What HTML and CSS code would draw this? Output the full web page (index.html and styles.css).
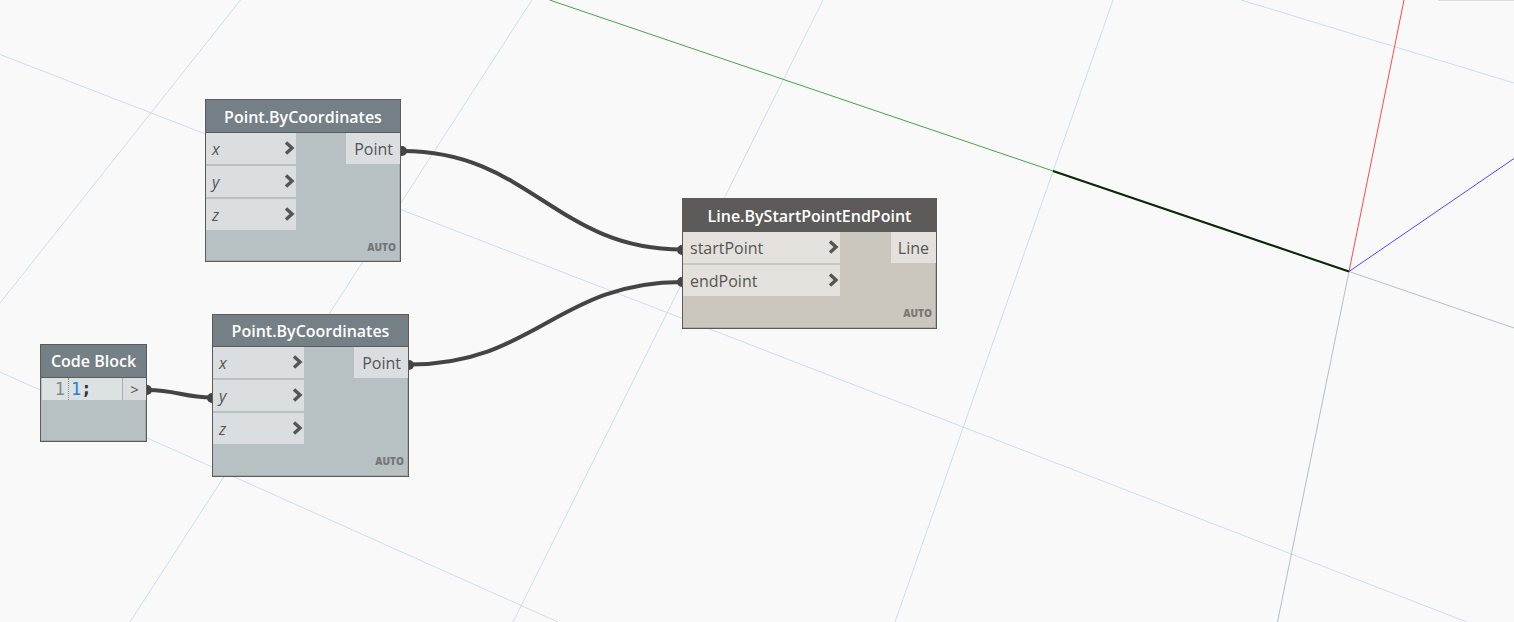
FILE: index.html
```
<!DOCTYPE html>
<html lang="en">
<head>
<meta charset="utf-8">
<title>Node graph</title>
<link rel="stylesheet" href="styles.css">
</head>
<body>
<main class="canvas">
  <svg class="scene" aria-hidden="true">
    <defs>
      <symbol id="chevron" viewBox="0 0 11 14"><path d="M2 1.5 8 7 2 12.5" fill="none" stroke="#555" stroke-width="3.4"/></symbol>
    </defs>
    <g class="grid">
      <path d="M0 54.5 1467 622M240.500 0 0 303M532 0 130 622M823 0 513 622M1113 0 895 622M1241 0 1514 83M0 372 558 622"/>
    </g>
    <path class="axis-back" d="M1349 271.500 1514 328M1349 271.500 1277.500 622"/>
    <path class="axis-y" d="M549.500 0 1349 271.500"/>
    <path class="axis-x" d="M1404 0 1349 271.500"/>
    <path class="axis-z" d="M1514 158.500 1349 271.500"/>
    <path class="result" d="M1053 171 1349 271.500"/>
    <g class="wires">
      <path d="M403 151C529 151 556 249.500 682 249.500"/>
      <path d="M410 364.500C534 364.500 558 282 682 282"/>
      <path d="M148 390C176 390 184 397.500 212 397.500"/>
    </g>
    <g class="plugs">
      <circle cx="402" cy="151" r="5"/><circle cx="682" cy="250" r="5"/>
      <circle cx="409" cy="365" r="5"/><circle cx="682" cy="282" r="5"/>
      <circle cx="147" cy="390" r="5"/><circle cx="212" cy="398" r="5"/>
    </g>
  </svg>
  <div class="tray"></div>

  <section class="node point-a">
    <h2 class="title">Point.ByCoordinates</h2>
    <div class="ports">
      <div class="inputs">
        <div class="port"><i>x</i><svg class="chevron"><use href="#chevron"/></svg></div>
        <div class="port"><i>y</i><svg class="chevron"><use href="#chevron"/></svg></div>
        <div class="port"><i>z</i><svg class="chevron"><use href="#chevron"/></svg></div>
      </div>
      <div class="port">Point</div>
    </div>
    <div class="lacing">AUTO</div>
  </section>

  <section class="node point-b">
    <h2 class="title">Point.ByCoordinates</h2>
    <div class="ports">
      <div class="inputs">
        <div class="port"><i>x</i><svg class="chevron"><use href="#chevron"/></svg></div>
        <div class="port"><i>y</i><svg class="chevron"><use href="#chevron"/></svg></div>
        <div class="port"><i>z</i><svg class="chevron"><use href="#chevron"/></svg></div>
      </div>
      <div class="port">Point</div>
    </div>
    <div class="lacing">AUTO</div>
  </section>

  <section class="node code-block">
    <h2 class="title">Code Block</h2>
    <div class="editor">
      <span class="line-number">1</span>
      <code class="code"><span class="number">1</span>;</code>
      <span class="code-port">&gt;</span>
    </div>
  </section>

  <section class="node line active">
    <h2 class="title">Line.ByStartPointEndPoint</h2>
    <div class="ports">
      <div class="inputs">
        <div class="port">startPoint<svg class="chevron"><use href="#chevron"/></svg></div>
        <div class="port">endPoint<svg class="chevron"><use href="#chevron"/></svg></div>
      </div>
      <div class="port">Line</div>
    </div>
    <div class="lacing">AUTO</div>
  </section>
</main>
</body>
</html>
```
FILE: styles.css
```
body {
  margin: 0;
  background: #f9f9f9;
  color: #555;
  font-family: "Open Sans", "Noto Sans", sans-serif;
  font-size: 16px;
}

.canvas {
  position: relative;
  height: 100vh;
  overflow: hidden;
}

/* Background preview and connectors */
.scene {
  display: block;
  width: 100%;
  height: 100%;
}

.scene > path,
.grid path {
  fill: none;
  stroke-width: 1;
}

.grid { stroke: #cbdfea; }
.scene .axis-back { stroke: #b4bfc7; }
.scene .axis-y { stroke: #46a346; }
.scene .axis-x { stroke: #ff4a4a; }
.scene .axis-z { stroke: #4a4aff; }
.scene .result { stroke: #062806; stroke-width: 2; }
.wires { fill: none; stroke: #444; stroke-width: 4; }
.plugs { fill: #444; }

.tray {
  position: absolute;
  top: 0;
  right: 0;
  width: 76px;
  height: 1px;
  background: #dedede;
}

/* Nodes */
.node {
  position: absolute;
  box-sizing: border-box;
  border: 1px solid #5c5b59;
  background: #b7c0c3;
  box-shadow: inset -1px -1px #a5aaab;
}

.point-a { left: 205px; top: 99px; width: 196px; }
.point-b { left: 212px; top: 314px; width: 197px; }
.code-block { left: 40px; top: 344px; width: 107px; height: 98px; }
.line { left: 682px; top: 198px; width: 255px; }

.title {
  margin: 0;
  padding-top: 2px;
  border-bottom: 1px solid #5c5b59;
  background: #758086;
  color: #fff;
  font-size: 16px;
  font-weight: 600;
  line-height: 30px;
  text-align: center;
  white-space: nowrap;
}

.point-b .title { padding-top: 1px; }

.code-block .title {
  padding-top: 0;
  line-height: 32px;
}

.ports {
  display: flex;
  justify-content: space-between;
  align-items: flex-start;
}

.inputs {
  display: grid;
  gap: 2px;
  width: 90px;
}

.point-b .inputs { width: 91px; }
.line .inputs { width: 157px; }

.port {
  display: flex;
  justify-content: space-between;
  align-items: center;
  padding: 2px 7px 0 8px;
  background: #dadee1;
  line-height: 29px;
}

.inputs .port { padding: 2px 1px 0 6px; }
.line .port { padding-left: 7px; }

.chevron {
  width: 11px;
  height: 14px;
  margin-bottom: 3px;
}

.lacing {
  padding: 4px 4px 0 0;
  color: #737778;
  font-size: 10px;
  font-weight: 800;
  line-height: 27px;
  text-align: right;
}

.point-b .lacing,
.line .lacing { padding-bottom: 1px; }

.active {
  background: #cbc6be;
  box-shadow: inset -1px -1px #b0aca6;
}

.active .title { background: #5c5b59; }
.active .port { background: #e4e1dc; }
.active .lacing { color: #7b7873; }

/* Code block editor */
.editor {
  display: flex;
  margin-left: 1px;
  background: #dce1e1;
  font-family: "DejaVu Sans Mono", monospace;
  font-size: 17px;
  line-height: 22px;
}

.line-number {
  box-sizing: border-box;
  width: 27px;
  padding-right: 3px;
  border-right: 1px dotted #888;
  color: #888;
  text-align: right;
}

.code {
  flex: 1;
  padding-left: 2px;
  color: #333;
  font: inherit;
  font-weight: 700;
}

.number {
  color: #2a7de1;
  font-weight: 400;
}

.code-port {
  width: 23px;
  border-left: 1px solid #a5aaab;
  background: #dadee1;
  font-family: "Open Sans", sans-serif;
  font-size: 15px;
  text-align: center;
}
```
